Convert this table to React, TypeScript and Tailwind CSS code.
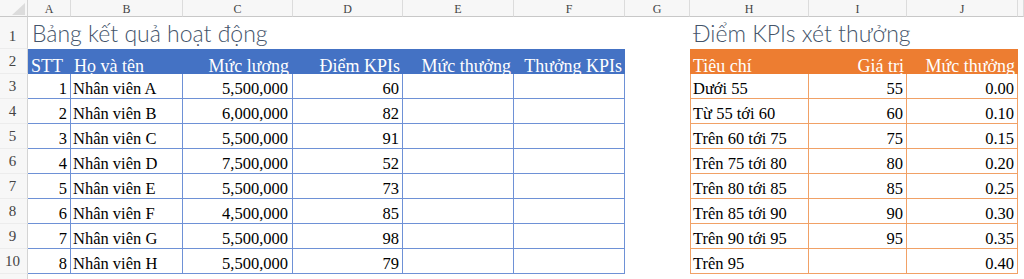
const serif = "font-['Liberation_Serif','Times_New_Roman',serif]";
const light = "font-['Lato','Calibri','Liberation_Sans',sans-serif] font-light";

const letters = ["A", "B", "C", "D", "E", "F", "G", "H", "I", "J", ""];

const staff = [
  [1, "Nhân viên A", "5,500,000", 60],
  [2, "Nhân viên B", "6,000,000", 82],
  [3, "Nhân viên C", "5,500,000", 91],
  [4, "Nhân viên D", "7,500,000", 52],
  [5, "Nhân viên E", "5,500,000", 73],
  [6, "Nhân viên F", "4,500,000", 85],
  [7, "Nhân viên G", "5,500,000", 98],
  [8, "Nhân viên H", "5,500,000", 79],
];

const rates = [
  ["Dưới 55", "55", "0.00"],
  ["Từ 55 tới 60", "60", "0.10"],
  ["Trên 60 tới 75", "75", "0.15"],
  ["Trên 75 tới 80", "80", "0.20"],
  ["Trên 80 tới 85", "85", "0.25"],
  ["Trên 85 tới 90", "90", "0.30"],
  ["Trên 90 tới 95", "95", "0.35"],
  ["Trên 95", "", "0.40"],
];

const blueCell = "border-r border-b border-[#6e91d6] flex items-end leading-[18px] text-[16.5px] text-black";
const orangeCell = "border-r border-b border-[#f1a166] flex items-end leading-[18px] text-[16.5px] text-black";
const blueHead = "bg-[#4472c4] text-white text-[18px] leading-[16px] flex items-end whitespace-nowrap";
const orangeHead = "bg-[#ed7d31] text-white text-[18px] leading-[16px] flex items-end whitespace-nowrap";

function RowHead({ n }: { n: number | string }) {
  return (
    <div className="bg-[#f7f7f7] border-r border-b border-r-[#d4d4d4] border-b-[#ececec] flex items-end justify-center pr-[2px] pb-[3px] text-[15px] leading-[18px] text-[#444]">
      {n}
    </div>
  );
}

export default function App() {
  return (
    <div
      className={`w-[1024px] h-[279px] overflow-hidden bg-white grid grid-cols-[28px_43px_112px_110px_110px_111px_111px_65px_119px_98px_111px_1fr] grid-rows-[17px_32px_25px_repeat(8,25px)_1fr] ${serif}`}
    >
      {/* column headers */}
      <div className="relative bg-[#f7f7f7] border-r border-b border-r-[#d4d4d4] border-b-[#c8c8c8]">
        <svg className="absolute left-[12px] top-[3px]" width="13" height="12" viewBox="0 0 13 12">
          <polygon points="13,0 13,12 0,12" fill="#dcdcdc" />
        </svg>
      </div>
      {letters.map((l, i) => (
        <div
          key={i}
          className="bg-[#f7f7f7] border-r border-b border-r-[#dcdcdc] border-b-[#c8c8c8] flex items-center justify-center text-[12px] text-[#444] leading-none pt-[1px]"
        >
          {l}
        </div>
      ))}

      {/* row 1: titles */}
      <RowHead n={1} />
      <div className="relative z-10 flex items-end pl-[4px] pb-[2px]">
        <span className={`${light} whitespace-nowrap text-[23px] leading-[28px] text-[#44546a]`}>
          Bảng kết quả hoạt động
        </span>
      </div>
      <div />
      <div />
      <div />
      <div />
      <div />
      <div />
      <div className="relative z-10 flex items-end pl-[3px] pb-[2px]">
        <span className={`${light} whitespace-nowrap text-[23px] leading-[28px] text-[#44546a]`}>
          Điểm KPIs xét thưởng
        </span>
      </div>
      <div />
      <div />
      <div />

      {/* row 2: table headers */}
      <RowHead n={2} />
      <div className={`${blueHead} pl-[3px]`}>STT</div>
      <div className={`${blueHead} pl-[3px]`}>Họ và tên</div>
      <div className={`${blueHead} justify-end pr-[4px]`}>Mức lương</div>
      <div className={`${blueHead} justify-end pr-[3px]`}>Điểm KPIs</div>
      <div className={`${blueHead} justify-end pr-[3px]`}>Mức thưởng</div>
      <div className={`${blueHead} justify-end pr-[3px]`}>Thưởng KPIs</div>
      <div />
      <div className={`${orangeHead} pl-[3px]`}>Tiêu chí</div>
      <div className={`${orangeHead} justify-end pr-[3px]`}>Giá trị</div>
      <div className={`${orangeHead} justify-end pr-[3px]`}>Mức thưởng</div>
      <div />

      {/* rows 3-10 */}
      {staff.map((s, i) => [
        <RowHead key={`h${i}`} n={i + 3} />,
        <div key={`a${i}`} className={`${blueCell} justify-end pr-[3px]`}>{s[0]}</div>,
        <div key={`b${i}`} className={`${blueCell} pl-[2px]`}>{s[1]}</div>,
        <div key={`c${i}`} className={`${blueCell} justify-end pr-[4px]`}>{s[2]}</div>,
        <div key={`d${i}`} className={`${blueCell} justify-end pr-[3px]`}>{s[3]}</div>,
        <div key={`e${i}`} className={blueCell} />,
        <div key={`f${i}`} className={blueCell} />,
        <div key={`g${i}`} />,
        <div key={`x${i}`} className={`${orangeCell} border-l pl-[2px] whitespace-nowrap`}>{rates[i][0]}</div>,
        <div key={`y${i}`} className={`${orangeCell} justify-end pr-[3px]`}>{rates[i][1]}</div>,
        <div key={`z${i}`} className={`${orangeCell} justify-end pr-[3px]`}>{rates[i][2]}</div>,
        <div key={`k${i}`} />,
      ])}

      {/* row 11 (cut off) */}
      <div className="bg-[#f7f7f7] border-r border-[#d4d4d4]" />
    </div>
  );
}
